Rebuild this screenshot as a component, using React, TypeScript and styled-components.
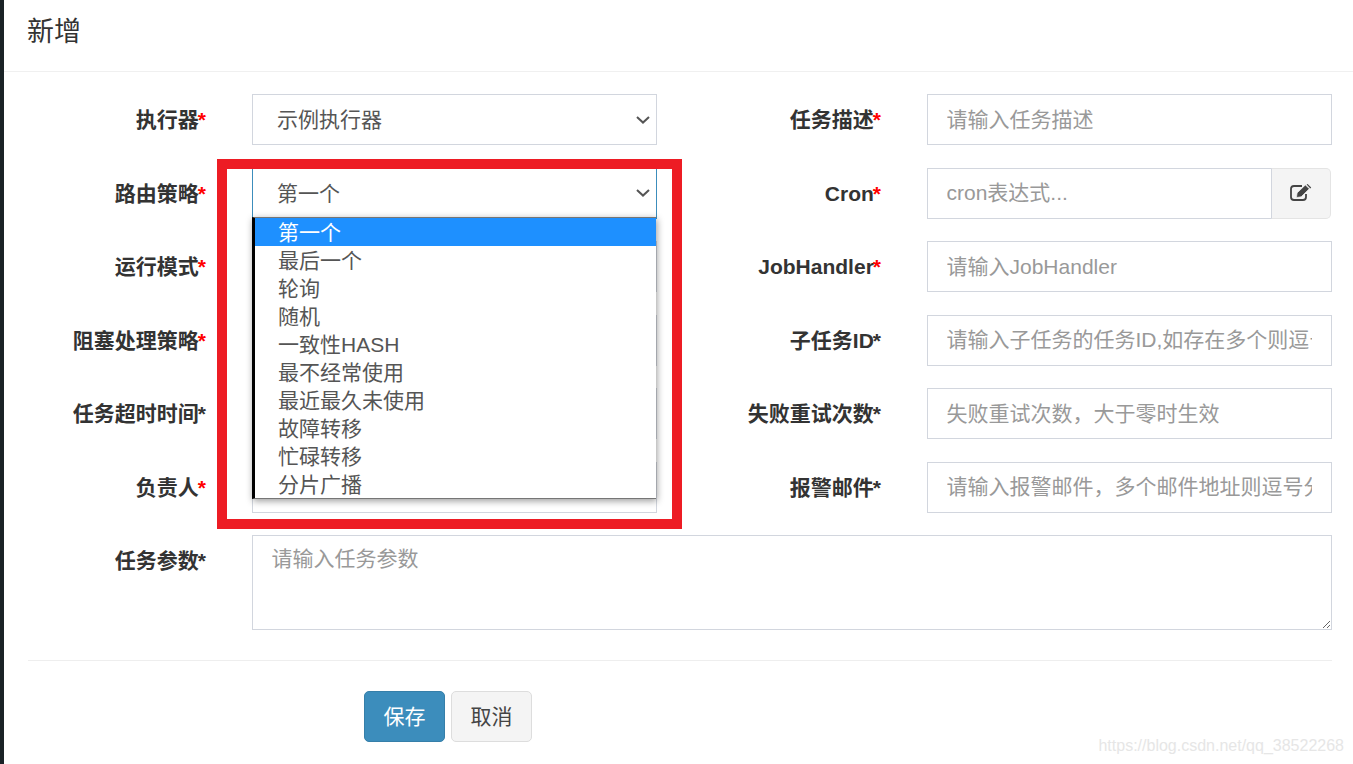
import React from "react";
import styled, { createGlobalStyle } from "styled-components";

const FONT = `"Liberation Sans", "Noto Sans CJK SC", sans-serif`;
const CHEVRON = `url("data:image/svg+xml,%3Csvg xmlns='http://www.w3.org/2000/svg' width='14' height='8' viewBox='0 0 14 8'%3E%3Cpath d='M1 1l6 5.6L13 1' fill='none' stroke='%23555' stroke-width='2'/%3E%3C/svg%3E")`;

const Global = createGlobalStyle`
  html, body { margin: 0; padding: 0; background: #fff; overflow: hidden; }
  body { font-family: ${FONT}; font-size: 21px; color: #333; }
  * { box-sizing: border-box; }
`;

const Page = styled.div`
  position: relative;
  display: flex;
  width: 1353px;
  height: 764px;
  overflow: hidden;
  background: #fff;
`;
const Strip = styled.div`
  width: 4px;
  flex: none;
  background: #1a2226;
`;
const Main = styled.div`
  flex: 1;
  min-width: 0;
`;
const Header = styled.header`
  height: 72px;
  padding: 13px 0 0 23px;
  border-bottom: 1px solid #f0f0f0;
`;
const Title = styled.h4`
  margin: 0;
  font-size: 27px;
  font-weight: 400;
  line-height: 38px;
  color: #333;
`;
const Body = styled.form`
  padding: 22px 21px 0 24px;
`;
const Grid = styled.div`
  display: grid;
  grid-template-columns: 224px 405px 270px 405px;
  row-gap: 22.5px;
`;
const Label = styled.label`
  padding-right: 46px;
  text-align: right;
  font-weight: 700;
  line-height: 51px;
  color: #333;
  white-space: nowrap;
  transform: translateY(-0.4px);
`;
const Star = styled.span<{ $red?: boolean }>`
  margin-left: -1px;
  color: ${(p) => (p.$red ? "#f00" : "#333")};
`;
const Cell = styled.div`
  position: relative;
  min-width: 0;
`;
const Select = styled.select<{ $focus?: boolean }>`
  display: block;
  appearance: none;
  width: 405px;
  height: 51px;
  padding: 0 30px 0 24px;
  border: 1px solid ${(p) => (p.$focus ? "#3c8dbc" : "#d2d6de")};
  border-radius: 0;
  outline: none;
  background: #fff ${CHEVRON} no-repeat right 6px center;
  color: #555;
  font: 21px ${FONT};
`;
const Input = styled.input`
  display: block;
  width: 100%;
  height: 51px;
  padding: 9px 19px 9px 18.5px;
  border: 1px solid #d2d6de;
  border-radius: 0;
  outline: none;
  background: #fff;
  color: #555;
  font: 21px ${FONT};
  &::placeholder { color: #999; opacity: 1; }
`;
const InputGroup = styled.div`
  display: flex;
  height: 51px;
`;
const Addon = styled.span`
  flex: none;
  display: flex;
  align-items: center;
  justify-content: center;
  width: 60px;
  margin-left: -1px;
  margin-right: 1px;
  border: 1px solid #e4e4e4;
  border-left-color: #d2d6de;
  border-radius: 0 5px 5px 0;
  background: #f4f4f4;
`;
const WideCell = styled(Cell)`
  grid-column: 2 / 5;
`;
const Textarea = styled.textarea`
  display: block;
  width: 100%;
  height: 95px;
  padding: 8px 19px 9px 18.5px;
  border: 1px solid #d2d6de;
  border-radius: 0;
  outline: none;
  background: #fff;
  color: #555;
  font: 21px/30px ${FONT};
  &::placeholder { color: #999; opacity: 1; }
`;
const Rule = styled.hr`
  margin: 30px 0;
  height: 1px;
  border: 0;
  background: #eee;
`;
const Footer = styled.div`
  display: flex;
  gap: 6px;
  padding-left: 336px;
`;
const Button = styled.button<{ $primary?: boolean }>`
  width: 81px;
  height: 51px;
  padding: 0 0 4px;
  border: 1px solid ${(p) => (p.$primary ? "#367fa9" : "#ddd")};
  border-radius: 5px;
  background: ${(p) => (p.$primary ? "#3c8dbc" : "#f4f4f4")};
  color: ${(p) => (p.$primary ? "#fff" : "#444")};
  font: 21px ${FONT};
`;
const Dropdown = styled.ul`
  position: absolute;
  z-index: 5;
  left: 0;
  top: 49px;
  width: 404px;
  margin: 0;
  padding: 0;
  list-style: none;
  background: #fff;
  border-top: 1px solid #767676;
  border-bottom: 1px solid #767676;
  border-left: 3px solid #000;
  box-shadow: 1px 2px 7px rgba(0, 0, 0, 0.4);
`;
const Option = styled.li<{ $active?: boolean }>`
  height: 28px;
  padding: 1px 0 0 23px;
  font-size: 21px;
  line-height: 28px;
  white-space: nowrap;
  background: ${(p) => (p.$active ? "#1e90ff" : "transparent")};
  color: ${(p) => (p.$active ? "#fff" : "#555")};
`;
const Annotation = styled.div`
  position: absolute;
  z-index: 10;
  left: 217px;
  top: 159px;
  width: 465px;
  height: 370px;
  border: 10px solid #ed1c24;
  pointer-events: none;
`;
const Watermark = styled.div`
  position: absolute;
  right: 9px;
  bottom: 8px;
  font-size: 16px;
  line-height: 20px;
  color: #e6e6e6;
  white-space: nowrap;
`;

const ROUTES = ["第一个", "最后一个", "轮询", "随机", "一致性HASH", "最不经常使用", "最近最久未使用", "故障转移", "忙碌转移", "分片广播"];

const Field: React.FC<{ text: string; red?: boolean }> = ({ text, red }) => (
  <Label>
    {text}
    <Star $red={red}>*</Star>
  </Label>
);

const EditIcon = () => (
  <svg width="22" height="18" viewBox="0 0 22 18" aria-hidden="true">
    <path
      d="M12 2H4a3 3 0 0 0-3 3v8a3 3 0 0 0 3 3h9a3 3 0 0 0 3-3V10"
      fill="none"
      stroke="#444"
      strokeWidth="1.8"
    />
    <path
      d="M6.5 13.5l.6-4.6L15.4.9l3.9 3.9-8.1 8z"
      fill="#444"
      stroke="#f4f4f4"
      strokeWidth="0.7"
    />
    <path d="M16.6.4l1-.4 3.6 3.4-.9 1.2z" fill="#444" />
  </svg>
);

export default function App() {
  return (
    <Page>
      <Global />
      <Strip />
      <Main>
        <Header>
          <Title>新增</Title>
        </Header>
        <Body>
          <Grid>
            <Field text="执行器" red />
            <Cell>
              <Select defaultValue="示例执行器">
                <option>示例执行器</option>
              </Select>
            </Cell>
            <Field text="任务描述" red />
            <Cell>
              <Input placeholder="请输入任务描述" />
            </Cell>

            <Field text="路由策略" red />
            <Cell>
              <Select $focus defaultValue="第一个">
                {ROUTES.map((r) => (
                  <option key={r}>{r}</option>
                ))}
              </Select>
              <Dropdown>
                {ROUTES.map((r, i) => (
                  <Option key={r} $active={i === 0}>
                    {r}
                  </Option>
                ))}
              </Dropdown>
            </Cell>
            <Field text="Cron" red />
            <Cell>
              <InputGroup>
                <Input placeholder="cron表达式..." />
                <Addon>
                  <EditIcon />
                </Addon>
              </InputGroup>
            </Cell>

            <Field text="运行模式" red />
            <Cell>
              <Select defaultValue="BEAN">
                <option>BEAN</option>
              </Select>
            </Cell>
            <Field text="JobHandler" red />
            <Cell>
              <Input placeholder="请输入JobHandler" />
            </Cell>

            <Field text="阻塞处理策略" red />
            <Cell>
              <Select defaultValue="单机串行">
                <option>单机串行</option>
              </Select>
            </Cell>
            <Field text="子任务ID" />
            <Cell>
              <Input placeholder="请输入子任务的任务ID,如存在多个则逗号分隔" />
            </Cell>

            <Field text="任务超时时间" />
            <Cell>
              <Input placeholder="任务超时时间，单位秒" />
            </Cell>
            <Field text="失败重试次数" />
            <Cell>
              <Input placeholder="失败重试次数，大于零时生效" />
            </Cell>

            <Field text="负责人" red />
            <Cell>
              <Input placeholder="请输入负责人" />
            </Cell>
            <Field text="报警邮件" />
            <Cell>
              <Input placeholder="请输入报警邮件，多个邮件地址则逗号分隔" />
            </Cell>

            <Field text="任务参数" />
            <WideCell>
              <Textarea placeholder="请输入任务参数" />
            </WideCell>
          </Grid>
          <Rule />
          <Footer>
            <Button type="button" $primary>
              保存
            </Button>
            <Button type="button">取消</Button>
          </Footer>
        </Body>
      </Main>
      <Annotation />
      <Watermark>https://blog.csdn.net/qq_38522268</Watermark>
    </Page>
  );
}
